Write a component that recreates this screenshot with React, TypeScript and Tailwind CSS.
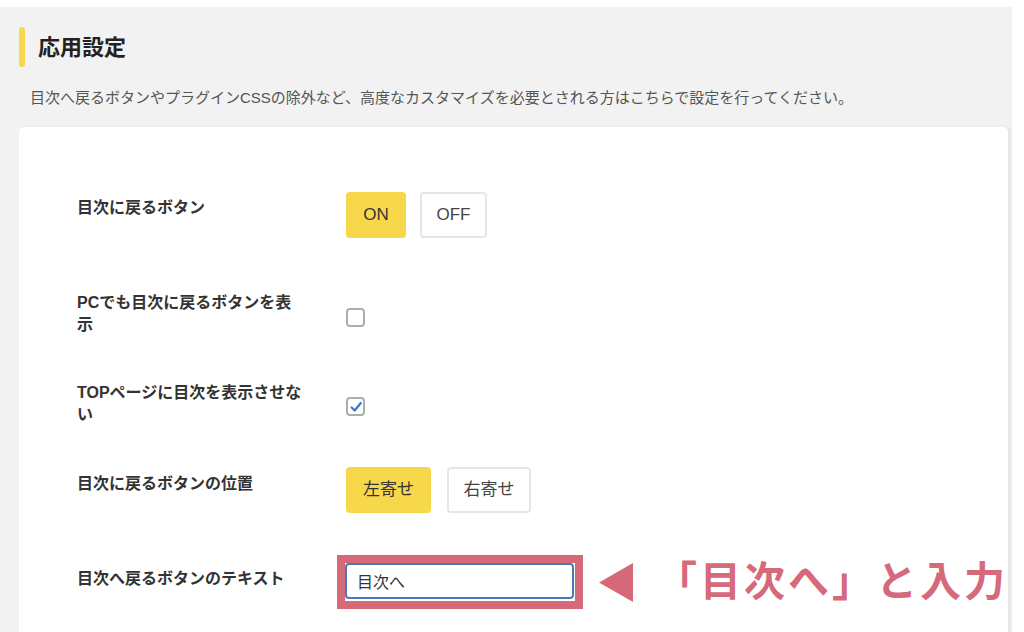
import { useState } from 'react';

const font = "font-['Liberation_Sans','Noto_Sans_CJK_JP',sans-serif]";

function Choice({ options, value, widths, gap }: { options: string[]; value: string; widths: string[]; gap: string }) {
  return (
    <div className={`flex ${gap}`}>
      {options.map((o, i) => (
        <button
          key={o}
          className={`h-[46px] ${widths[i]} rounded-[4px] text-[17px] ${
            o === value ? 'bg-[#f7d84a] text-[#333]' : 'border-2 border-[#e6e6e6] bg-white text-[#444]'
          }`}
        >
          {o}
        </button>
      ))}
    </div>
  );
}

function Check({ checked }: { checked: boolean }) {
  return (
    <div className="flex h-[19px] w-[19px] items-center justify-center rounded-[4px] border-2 border-[#adadad] bg-white">
      {checked && (
        <svg viewBox="0 0 16 16" className="h-[14px] w-[14px]">
          <path d="M3 8.5 L6.5 12 L13.5 3.5" fill="none" stroke="#3b7bd0" strokeWidth="2.6" strokeLinecap="round" strokeLinejoin="round" />
        </svg>
      )}
    </div>
  );
}

const label = 'w-[269px] shrink-0 text-[16px] font-bold leading-[22px] text-[#333]';

export default function App() {
  const [text, setText] = useState('目次へ');

  return (
    <div className={`min-h-[632px] bg-white pt-[7px] ${font}`}>
      <div className="h-[625px] w-[1012px] overflow-hidden bg-[#f2f2f2] pl-[19px] pr-[4px]">
        <div className="flex items-center gap-[13px] pt-[20px]">
          <div className="h-[40px] w-[6px] rounded-full bg-[#f7d84a]" />
          <h2 className="text-[22px] font-bold text-[#222]">応用設定</h2>
        </div>
        <p className="mt-[20px] pl-[11px] text-[15px] leading-[22px] text-[#555]">
          目次へ戻るボタンやプラグインCSSの除外など、高度なカスタマイズを必要とされる方はこちらで設定を行ってください。
        </p>

        <div className="mt-[18px] h-[520px] rounded-t-[5px] bg-white pl-[58px] pt-[65px] shadow-[3px_0_4px_rgba(0,0,0,0.05)]">
          {/* row 1 */}
          <div className="flex items-start">
            <div className={`${label} pt-[5px]`}>目次に戻るボタン</div>
            <Choice options={['ON', 'OFF']} value="ON" widths={['w-[60px]', 'w-[67px]']} gap="gap-[14px]" />
          </div>

          {/* row 2 */}
          <div className="mt-[54px] flex items-center">
            <div className={label}>
              PCでも目次に戻るボタンを表
              <br />
              示
            </div>
            <div className="mt-[6px]">
              <Check checked={false} />
            </div>
          </div>

          {/* row 3 */}
          <div className="mt-[46px] flex items-center">
            <div className={label}>
              TOPページに目次を表示させな
              <br />い
            </div>
            <div className="mt-[5px]">
              <Check checked />
            </div>
          </div>

          {/* row 4 */}
          <div className="mt-[41px] flex items-start">
            <div className={`${label} pt-[6px]`}>目次に戻るボタンの位置</div>
            <Choice options={['左寄せ', '右寄せ']} value="左寄せ" widths={['w-[85px]', 'w-[84px]']} gap="gap-[16px]" />
          </div>

          {/* row 5 */}
          <div className="mt-[42px] flex items-start">
            <div className={`${label} pt-[13px]`}>目次へ戻るボタンのテキスト</div>
            <div className="ml-[-9px] flex shrink-0 items-center">
              <div className="border-[8px] border-[#d56879] bg-white pb-[2px] pr-px">
                <input
                  value={text}
                  onChange={(e) => setText(e.target.value)}
                  className="h-[36px] w-[229px] rounded-[4px] border-2 border-[#4a79b8] px-[10px] text-[16px] text-[#333] outline-none"
                />
              </div>
              <svg viewBox="0 0 34 39" className="ml-[16px] h-[39px] w-[34px] shrink-0">
                <polygon points="34,0 34,39 0,19.5" fill="#d56879" />
              </svg>
              <span className="ml-[23px] whitespace-nowrap text-[41px] font-bold leading-none tracking-[3px] text-[#d66a7a]">「目次へ」と入力</span>
            </div>
          </div>
        </div>
      </div>
    </div>
  );
}
